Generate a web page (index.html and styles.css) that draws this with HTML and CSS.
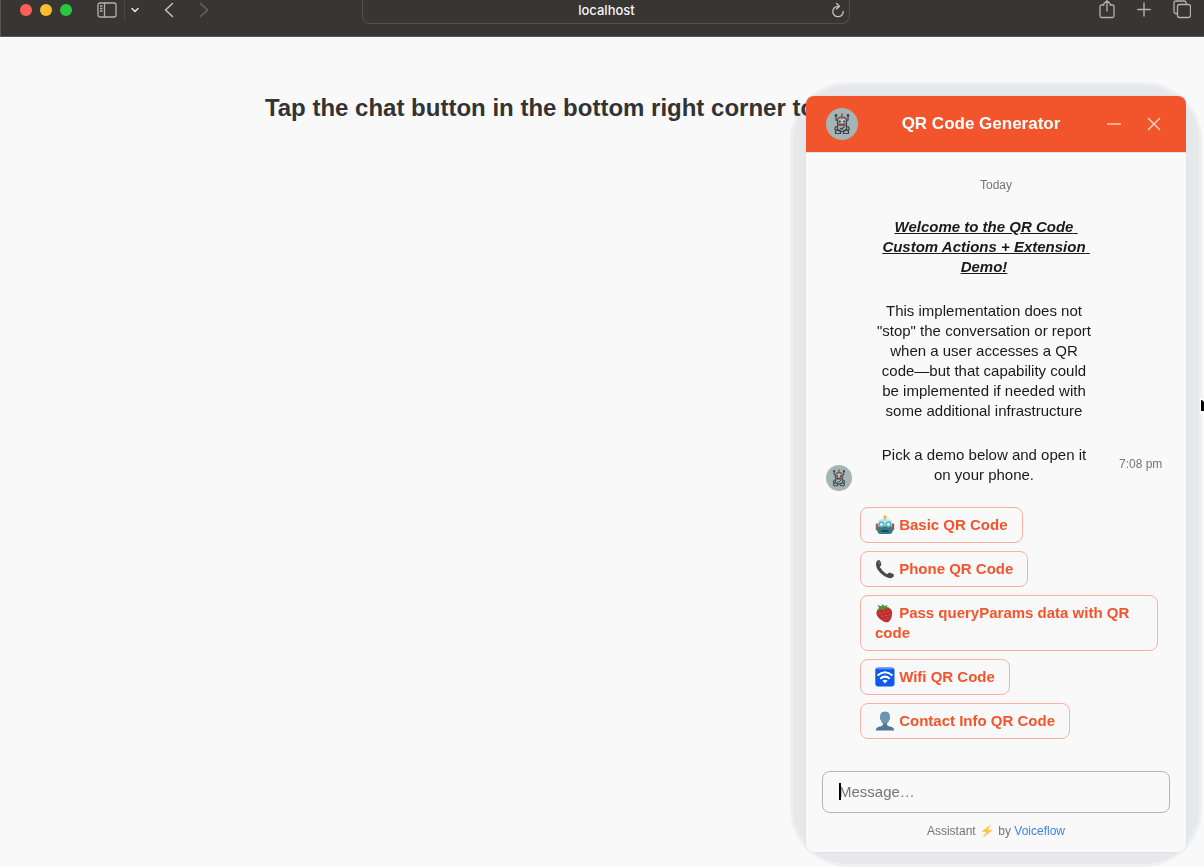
FILE: index.html
```html
<!DOCTYPE html>
<html lang="en">
<head>
<meta charset="utf-8">
<meta name="viewport" content="width=device-width, initial-scale=1">
<title>QR Code Generator</title>
<link rel="stylesheet" href="styles.css">
</head>
<body>
<svg class="defs" aria-hidden="true">
  <symbol id="bot-avatar" viewBox="0 0 32 32">
    <circle cx="16" cy="16" r="16" fill="#a5b4b5"/>
    <g fill="none" stroke="#39424e" stroke-width="1.2">
      <path d="M10 8v4l2.500 1M22 8v4l-2.500 1M16 5.500v3"/>
      <path d="M11.500 13q0-4 4.500-4t4.500 4v2.500q-4.500 1.500-9 0z" fill="#b9c3c5"/>
      <path d="M11.500 17h9v5q-4.500 3-9 0z"/>
      <path d="M11.500 18.500q-3 0-2.500 3l2 1.500M20.500 18.500q3 0 2.500 3l-2 1.500"/>
      <path d="M9.500 22.500q2.500-1.500 5 .5v2.500h-5zM17.500 23q2.500-2 5-.5v3h-5zM14 20l1.500 1.500 3-3"/>
    </g>
    <circle cx="10" cy="7.500" r="1.400" fill="#39424e"/><circle cx="22" cy="7.500" r="1.400" fill="#39424e"/>
    <path d="M13 10.500q3-3.500 6 0z" fill="#c8402f"/>
    <path d="M12 17.500h8" stroke="#c8402f" stroke-width="1"/>
    <circle cx="13.700" cy="13.500" r="1.100" fill="#29323d"/><circle cx="18.300" cy="13.500" r="1.100" fill="#29323d"/>
  </symbol>
</svg>

<header class="toolbar">
  <div class="toolbar-left">
    <div class="lights"><span class="light red"></span><span class="light yellow"></span><span class="light green"></span></div>
    <button class="tool sidebar" aria-label="Show sidebar"><svg width="20" height="16" viewBox="0 0 20 16" fill="none" stroke="#b3b2b0" stroke-width="1.3"><rect x="1" y="1" width="18" height="14" rx="2"/><path d="M7.500 1v14M3 4h2.500M3 6.500h2.500M3 9h2.500"/></svg></button>
    <button class="tool chevron" aria-label="Tab groups"><svg width="10" height="8" viewBox="0 0 10 8" fill="none" stroke="#e0dfde" stroke-width="1.600" stroke-linecap="round" stroke-linejoin="round"><path d="M2 2.500l3 3 3-3"/></svg></button>
    <button class="tool back" aria-label="Back"><svg width="10" height="16" viewBox="0 0 10 16" fill="none" stroke="#c4c3c1" stroke-width="1.500" stroke-linecap="round" stroke-linejoin="round"><path d="M8.500 1.500L1.500 8l7 6.500"/></svg></button>
    <button class="tool forward" aria-label="Forward"><svg width="10" height="16" viewBox="0 0 10 16" fill="none" stroke="#656461" stroke-width="1.500" stroke-linecap="round" stroke-linejoin="round"><path d="M1.500 1.500L8.500 8l-7 6.500"/></svg></button>
  </div>
  <div class="address">
    <input class="url" type="text" value="localhost" aria-label="Address">
    <button class="tool reload" aria-label="Reload"><svg width="14" height="16" viewBox="0 0 14 16" fill="none" stroke="#c4c3c1" stroke-width="1.300" stroke-linecap="round" stroke-linejoin="round"><path d="M7 4.300A5.200 5.200 0 1 0 12.200 9.500M5.500 1.500L8.500 4.300 5.500 7"/></svg></button>
  </div>
  <div class="toolbar-right">
    <button class="tool" aria-label="Share"><svg width="16" height="20" viewBox="0 0 16 20" fill="none" stroke="#b3b2b0" stroke-width="1.300" stroke-linecap="round" stroke-linejoin="round"><path d="M5 5H2.500Q1 5 1 6.500v9.500q0 1.500 1.500 1.500h11q1.500 0 1.500-1.500V6.500Q15 5 13.500 5H11M8 11V.8M4.800 3.800L8 .8l3.200 3"/></svg></button>
    <button class="tool" aria-label="New tab"><svg width="14" height="20" viewBox="0 0 14 20" fill="none" stroke="#b3b2b0" stroke-width="1.400" stroke-linecap="round"><path d="M7 3v13M0.700 9.500h12.600"/></svg></button>
    <button class="tool" aria-label="Tab overview"><svg width="18" height="20" viewBox="0 0 18 20" fill="none" stroke="#b3b2b0" stroke-width="1.300"><rect x="4.500" y="4.500" width="13" height="13" rx="2"/><path d="M4.500 13.500H3q-2 0-2-2V3q0-2 2-2h8q2 0 2 2v1.500"/></svg></button>
  </div>
</header>

<main class="page">
  <h1 class="headline">Tap the chat button in the bottom right corner to</h1>
</main>

<section class="chat" aria-label="QR Code Generator">
  <div class="panel">
    <header class="chat-header">
      <svg class="avatar" width="32" height="32" aria-hidden="true"><use href="#bot-avatar"/></svg>
      <h2 class="chat-title">QR Code Generator</h2>
      <button class="tool" aria-label="Minimize"><svg width="20" height="20" fill="none" stroke="#ffc9bb" stroke-width="1.600"><path d="M3 10h14"/></svg></button>
      <button class="tool" aria-label="Close"><svg width="20" height="20" fill="none" stroke="#ffd9cf" stroke-width="1.400" stroke-linecap="round"><path d="M4.500 4.500l11 11M15.500 4.500l-11 11"/></svg></button>
    </header>

    <div class="dialog">
      <p class="day">Today</p>
      <div class="message">
        <svg class="message-avatar" width="26" height="26" aria-hidden="true"><use href="#bot-avatar"/></svg>
        <div class="bubble">
          <p class="welcome">Welcome to the QR Code Custom Actions + Extension Demo!</p>
          <p>This implementation does not "stop" the conversation or report when a user accesses a QR code—but that capability could be implemented if needed with some additional infrastructure</p>
          <p>Pick a demo below and open it on your phone.</p>
        </div>
        <time class="time">7:08 pm</time>
      </div>
      <div class="choices">
        <button class="choice"><svg class="emoji" viewBox="0 0 20 20" aria-hidden="true"><path d="M10 2v3" stroke="#b78b35" stroke-width="2"/><circle cx="10" cy="2" r="1.700" fill="#f5b82e"/><rect x=".8" y="8.500" width="3" height="7" rx="1" fill="#c44a3d"/><rect x="16.200" y="8.500" width="3" height="7" rx="1" fill="#c44a3d"/><path d="M3 6.500Q3.500 4 10 4t7 2.500V12H3z" fill="#b9dfe6"/><path d="M2.500 11.500h15V17q-.5 2-3 2h-9q-2.500 0-3-2z" fill="#2f7c8a"/><circle cx="6.500" cy="9.500" r="2.900" fill="#45b3c6"/><circle cx="13.500" cy="9.500" r="2.900" fill="#45b3c6"/><circle cx="6.500" cy="9.500" r="1.400" fill="#e9ffff"/><circle cx="13.500" cy="9.500" r="1.400" fill="#e9ffff"/><path d="M10 10.500l1.500 3h-3z" fill="#bd3f38"/><path d="M6.500 16h7" stroke="#173f49" stroke-width="1.500"/></svg> Basic QR Code</button>
        <button class="choice"><svg class="emoji" viewBox="0 0 20 20" aria-hidden="true"><path d="M1.200 3.200Q2.500.5 4.500 1.200q1.800 1.800 2 4.500L4.800 8q2.700 4.800 7.200 7.200l2.200-1.700q3 .3 4.800 2.300.3 2.200-2.500 3.300-5.500.5-11-5T1.200 3.200z" fill="#4a4a4b"/><path d="M3 2.500q2 1 2 3" stroke="#858585" fill="none"/></svg> Phone QR Code</button>
        <button class="choice"><svg class="emoji" viewBox="0 0 20 20" aria-hidden="true"><path d="M1.500 9Q2 5.500 6.500 5q4-2 8.500.5 2.500 1.500 2 6-.5 5-3.500 7.500-3.500 1-8-2.500-4.500-3.500-4-7.500z" fill="#c02e30"/><path d="M2 7.500q2.500.5 4-1.500 2 2 5-.5l3.500-.5-3-1.500L13 2 9 3 7.500.8 6.500 3.300 2.500 2l1.500 2.700z" fill="#559039"/><g fill="#edae68"><circle cx="5" cy="10" r=".5"/><circle cx="9" cy="9.500" r=".5"/><circle cx="13" cy="8.500" r=".5"/><circle cx="7" cy="13" r=".5"/><circle cx="11" cy="12.500" r=".5"/><circle cx="14.500" cy="11.500" r=".5"/><circle cx="10" cy="16" r=".5"/><circle cx="13" cy="15" r=".5"/></g></svg> Pass queryParams data with QR code</button>
        <button class="choice"><svg class="emoji" viewBox="0 0 20 20" aria-hidden="true"><rect x=".3" y=".5" width="19.200" height="19" rx="3" fill="#0c59ea"/><path d="M2 1.500h16" stroke="#5897ff" stroke-width="1.500"/><g fill="none" stroke="#fff" stroke-width="2"><path d="M2.500 8.500q7.500-6.500 15 0M5.200 11.700q4.800-4.200 9.600 0"/></g><path d="M7.400 13.700q2.600-2 5.200 0L10 16.500z" fill="#fff"/></svg> Wifi QR Code</button>
        <button class="choice"><svg class="emoji" viewBox="0 0 20 20" aria-hidden="true"><path d="M5.300 6Q5 .8 10 .8T14.700 6q1 2-.7 3-.5 2.500-2 3.500V14q1 1.300 5 2 2 .5 2.300 3.500H.7Q1 16.500 3 16q4-.7 5-2v-1.500Q6.500 11.500 6 9q-1.700-1-.7-3z" fill="#527696"/><path d="M5.300 6Q5 .8 10 .8T14.700 6q1 2-.7 3-.5 2.500-2 3.500H8Q6.500 11.500 6 9q-1.700-1-.7-3z" fill="#6d96b4"/></svg> Contact Info QR Code</button>
      </div>
    </div>

    <footer class="chat-footer">
      <div class="composer">
        <input class="field" type="text" placeholder="Message…" aria-label="Message">
        <span class="caret"></span>
      </div>
      <p class="credit">Assistant <svg class="bolt" viewBox="0 0 16 14" aria-hidden="true"><path d="M12.500 0L2.500 7.500l4.500.8L3.500 14 13.500 6.200l-4.500-.8z" fill="#fdc650"/></svg> by <a href="#">Voiceflow</a></p>
    </footer>
  </div>
</section>

<svg class="pointer" width="4" height="16" viewBox="0 0 4 16" aria-hidden="true"><path d="M0 0h2l2 2v14H0z" fill="#fff"/><path d="M1 2h1l2 2v9H1z" fill="#000"/></svg>
</body>
</html>
```

FILE: styles.css
```css
* {
  box-sizing: border-box;
}

body {
  margin: 0;
  min-height: 100vh;
  overflow: hidden;
  background: #f9f9f9;
  color: #1a1a1a;
  font-family: "Liberation Sans", Arial, Helvetica, sans-serif;
}

h1,
h2,
p {
  margin: 0;
}

.defs {
  display: none;
}

.tool {
  display: flex;
  flex: none;
  padding: 0;
  border: 0;
  background: none;
}

/* Browser toolbar */
.toolbar {
  display: grid;
  grid-template-columns: 1fr minmax(0, 488px) 1fr;
  height: 37px;
  padding: 0 13px 0 19px;
  background: #383634;
  border-left: 1px solid #5a5957;
  border-bottom: 1px solid #5a5957;
}

.toolbar-left,
.toolbar-right {
  display: flex;
  align-items: center;
  height: 20px;
}

.toolbar-right {
  justify-content: flex-end;
  gap: 22px;
}

.lights {
  display: flex;
  gap: 8px;
}

.light {
  width: 12px;
  height: 12px;
  border-radius: 50%;
}

.red {
  background: #fe5f57;
}

.yellow {
  background: #febc2e;
}

.green {
  background: #28c840;
}

.sidebar {
  width: 27px;
  height: 20px;
  align-items: center;
  margin-left: 25px;
}

.chevron {
  width: 17px;
  height: 20px;
  align-items: center;
  justify-content: center;
  padding-left: 4px;
  border-left: 1px solid #4a4947;
}

.back {
  margin-left: 23px;
}

.forward {
  margin-left: 25px;
}

.address {
  display: flex;
  align-items: center;
  height: 24px;
  padding: 0 4px 4px 0;
  border: 1px solid #52504e;
  border-top: 0;
  border-radius: 0 0 8px 8px;
}

.url {
  flex: 1;
  min-width: 0;
  height: 20px;
  padding: 0 0 0 20px;
  border: 0;
  outline: 0;
  background: none;
  color: #f4f4f3;
  font: 500 13px/20px Inter, "Liberation Sans", sans-serif;
  text-align: center;
}

/* Host page */
.page {
  padding: 57px 0 0 22%;
}

.headline {
  color: #333;
  font-size: 24px;
  line-height: 28px;
  white-space: nowrap;
}

/* Chat widget */
.chat {
  position: fixed;
  top: 96px;
  right: 18px;
  bottom: 15px;
  width: 380px;
}

.chat::before {
  content: "";
  position: absolute;
  inset: -14px -16px -15px;
  border: 3px solid rgba(80, 90, 110, 0.055);
  border-radius: 58px;
  background: rgba(80, 90, 110, 0.1);
  background-clip: padding-box;
}

.panel {
  position: relative;
  display: flex;
  flex-direction: column;
  height: 100%;
  overflow: hidden;
  border-radius: 8px;
  background: #f9f9f9;
  box-shadow: 0 0 0 1px rgba(80, 90, 110, 0.05);
}

.chat-header {
  display: flex;
  align-items: center;
  gap: 20px;
  flex: none;
  height: 57px;
  padding: 0 22px 0 20px;
  border-bottom: 1px solid #e4e4e4;
  background: #f2552c;
  background-clip: padding-box;
}

.avatar,
.message-avatar {
  flex: none;
}

.chat-title {
  flex: 1;
  color: #fff;
  font-size: 17px;
  line-height: 24px;
  text-align: center;
}

.dialog {
  flex: 1;
  min-height: 0;
  padding: 24px 20px 0;
}

.day {
  color: #757575;
  font-size: 12px;
  line-height: 16px;
  text-align: center;
}

.message {
  display: flex;
  align-items: flex-end;
  gap: 8px;
  margin-top: 24px;
}

.bubble {
  display: flex;
  flex-direction: column;
  gap: 24px;
  width: 248px;
  padding: 0 16px 6px;
  font-size: 15px;
  line-height: 20px;
  text-align: center;
}

.welcome {
  font-weight: bold;
  font-style: italic;
  text-decoration: underline;
  white-space: pre-wrap;
}

.time {
  flex: none;
  padding: 0 0 19px 3px;
  color: #757575;
  font-size: 12px;
  line-height: 16px;
}

.choices {
  display: flex;
  flex-direction: column;
  align-items: flex-start;
  gap: 8px;
  margin-top: 16px;
  padding: 0 8px 0 34px;
}

.choice {
  padding: 7px 14px;
  border: 1px solid #fbb0a0;
  border-radius: 8px;
  background: #f9f9f9;
  color: #f2552c;
  font: bold 15px/20px "Liberation Sans", Arial, sans-serif;
  text-align: left;
}

.emoji {
  width: 20px;
  height: 20px;
  margin: -2px 0;
  vertical-align: -3px;
}

.chat-footer {
  flex: none;
  padding: 0 16px 13px;
}

.composer {
  position: relative;
}

.field {
  display: block;
  width: 100%;
  height: 42px;
  padding: 0 16px 2px;
  border: 1px solid #b5b5b5;
  border-radius: 8px;
  outline: 0;
  background: #f9f9f9;
  font: 15px/20px "Liberation Sans", Arial, sans-serif;
}

.field::placeholder {
  color: #757575;
}

.caret {
  position: absolute;
  top: 12px;
  left: 17px;
  width: 2px;
  height: 17px;
  background: #000;
}

.credit {
  margin-top: 10px;
  color: #757575;
  font-size: 12px;
  line-height: 16px;
  text-align: center;
}

.credit a {
  color: #3d82e2;
  text-decoration: none;
}

.bolt {
  width: 16px;
  height: 14px;
  margin: -2px 0;
  vertical-align: -1px;
}

.pointer {
  position: fixed;
  top: 398px;
  right: 0;
}
```
